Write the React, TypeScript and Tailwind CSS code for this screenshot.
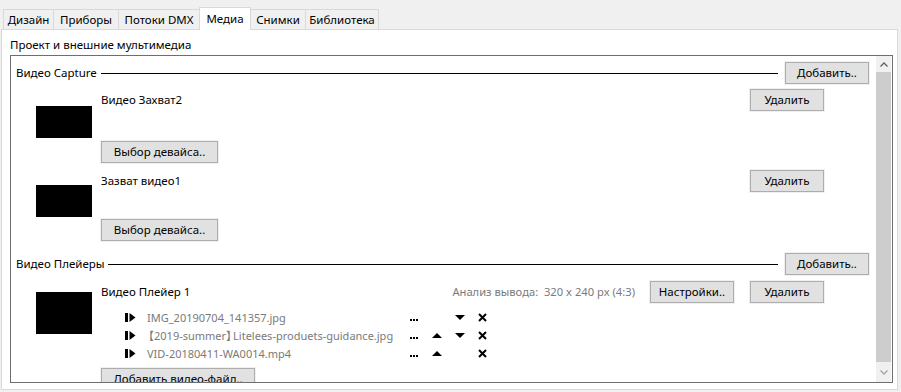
import React from "react";

function Btn({ children, className = "" }: { children: React.ReactNode; className?: string }) {
  return (
    <div
      className={`h-[22px] shrink-0 flex items-center justify-center border border-[#adadad] bg-[#e1e1e1] shadow-[0_0_0_1px_#f0f0f0] text-[11.5px] leading-none text-black ${className}`}
    >
      {children}
    </div>
  );
}

function Header({ label, mt }: { label: string; mt: string }) {
  return (
    <div className={`flex items-center h-[22px] ${mt}`}>
      <span className="text-[11.5px] leading-none">{label}</span>
      <div className="flex-1 h-px bg-black ml-[4px] mr-[7px]" />
      <Btn className="w-[84px]">Добавить..</Btn>
    </div>
  );
}

function PlayIcon() {
  return (
    <svg width="11" height="9" viewBox="0 0 11 9" className="block">
      <rect x="0" y="0" width="3" height="9" fill="#000" />
      <path d="M4.5 0 L10.5 4.5 L4.5 9 Z" fill="#000" />
    </svg>
  );
}

function Dots() {
  return (
    <svg width="8" height="2" viewBox="0 0 8 2" className="block mt-[6px]">
      <rect x="0" y="0" width="2" height="2" fill="#000" />
      <rect x="3" y="0" width="2" height="2" fill="#000" />
      <rect x="6" y="0" width="2" height="2" fill="#000" />
    </svg>
  );
}

function Up() {
  return (
    <svg width="10" height="5" viewBox="0 0 10 5" className="block">
      <path d="M0 5 L5 0 L10 5 Z" fill="#000" />
    </svg>
  );
}

function Down() {
  return (
    <svg width="10" height="5" viewBox="0 0 10 5" className="block">
      <path d="M0 0 L10 0 L5 5 Z" fill="#000" />
    </svg>
  );
}

function Cross() {
  return (
    <svg width="9" height="9" viewBox="0 0 9 9" className="block">
      <path d="M1 1 L8 8 M8 1 L1 8" stroke="#000" strokeWidth="2" />
    </svg>
  );
}

function CaptureItem({
  title,
  mt,
  rectMt,
  btnMt,
}: {
  title: string;
  mt: string;
  rectMt: string;
  btnMt: string;
}) {
  return (
    <div className={`flex ${mt}`}>
      <div className="w-[85px] shrink-0 pl-[20px]">
        <div className={`w-[56px] h-[32px] bg-black ${rectMt}`} />
      </div>
      <div className="flex-1 pr-[45px] flex flex-col items-start">
        <div className="self-stretch flex items-center justify-between h-[22px]">
          <span className="text-[11.5px] leading-none">{title}</span>
          <Btn className="w-[74px]">Удалить</Btn>
        </div>
        <Btn className={`w-[117px] ${btnMt}`}>Выбор девайса..</Btn>
      </div>
    </div>
  );
}

const files: { name: React.ReactNode; up: boolean; down: boolean }[] = [
  { name: "IMG_20190704_141357.jpg", up: false, down: true },
  {
    name: (
      <>
        <span className="-ml-[4px]">【</span>2019-summer<span className="tracking-[-4px]">】</span>Litelees-produets-guidance.jpg
      </>
    ),
    up: true,
    down: true,
  },
  { name: "VID-20180411-WA0014.mp4", up: true, down: false },
];

export default function App() {
  const tabs = [
    { label: "Дизайн", w: "w-[51px]" },
    { label: "Приборы", w: "w-[66px]" },
    { label: "Потоки DMX", w: "w-[82px]" },
    { label: "Медиа", w: "w-[52px]", active: true },
    { label: "Снимки", w: "w-[56px]" },
    { label: "Библиотека", w: "w-[74px]" },
  ];
  return (
    <div className="w-[901px] h-[392px] bg-[#f0f0f0] overflow-hidden font-['Noto_Sans',sans-serif] text-black">
      <div className="h-[29px] flex items-end pl-[3px] relative z-10">
        {tabs.map((t, i) =>
          t.active ? (
            <div
              key={i}
              className={`${t.w} h-[23px] -mb-px -ml-px bg-white border border-b-0 border-[#d9d9d9] flex items-center justify-center text-[11.5px] leading-none pb-[1px]`}
            >
              {t.label}
            </div>
          ) : (
            <div
              key={i}
              className={`${t.w} h-[20px] ${i === 0 ? "" : "-ml-px"} bg-[#f0f0f0] border border-b-0 border-[#d9d9d9] flex items-center justify-center text-[11.5px] leading-none pt-[1px]`}
            >
              {t.label}
            </div>
          )
        )}
      </div>
      <div className="ml-[1px] w-[897px] h-[361px] border border-[#d9d9d9] bg-white pl-[8px] pt-[7px]">
        <div className="text-[11.5px] leading-[16px]">Проект и внешние мультимедиа</div>
        <div className="mt-[2px] w-[883px] h-[328px] border border-[#6e6e6e] flex">
          <div className="flex-1 overflow-hidden pl-[5px] pr-[7px]">
            <Header label="Видео Capture" mt="mt-[6px]" />
            <CaptureItem title="Видео Захват2" mt="mt-[5px]" rectMt="mt-[17px]" btnMt="mt-[30px]" />
            <CaptureItem title="Зазват видео1" mt="mt-[7px]" rectMt="mt-[15px]" btnMt="mt-[27px]" />
            <Header label="Видео Плейеры" mt="mt-[12px]" />
            <div className="flex mt-[6px]">
              <div className="w-[85px] shrink-0 pl-[20px]">
                <div className="w-[56px] h-[42px] bg-black mt-[11px]" />
              </div>
              <div className="flex-1 pr-[45px] flex flex-col items-start">
                <div className="self-stretch flex items-center h-[22px]">
                  <span className="text-[11.5px] leading-none">Видео Плейер 1</span>
                  <div className="flex-1" />
                  <span className="text-[11.2px] leading-none text-[#7a7a7a] whitespace-pre">
                    Анализ вывода:  320 x 240 px (4:3)
                  </span>
                  <Btn className="w-[84px] ml-[15px]">Настройки..</Btn>
                  <Btn className="w-[74px] ml-[16px]">Удалить</Btn>
                </div>
                <div className="mt-[5px] flex flex-col">
                  {files.map((f, i) => (
                    <div key={i} className="flex items-center h-[18px]">
                      <div className="w-[24px]" />
                      <div className="w-[22px]">
                        <PlayIcon />
                      </div>
                      <div className="w-[263px] text-[11px] leading-none text-[#7a7a7a] whitespace-nowrap font-['Noto_Sans','Noto_Sans_CJK_SC',sans-serif]">
                        {f.name}
                      </div>
                      <div className="w-[22px]">
                        <Dots />
                      </div>
                      <div className="w-[23px]">{f.up ? <Up /> : null}</div>
                      <div className="w-[23px]">{f.down ? <Down /> : null}</div>
                      <div className="w-[10px]">
                        <Cross />
                      </div>
                    </div>
                  ))}
                </div>
                <Btn className="w-[154px] mt-[6px]">Добавить видео-файл..</Btn>
              </div>
            </div>
          </div>
          <div className="w-[15px] flex flex-col mr-[1px]">
            <div className="h-[16px] bg-[#f0f0f0] flex items-center justify-center">
              <svg width="8" height="5" viewBox="0 0 8 5" className="block">
                <path d="M0.5 4.5 L4 1 L7.5 4.5" stroke="#606060" strokeWidth="1.3" fill="none" />
              </svg>
            </div>
            <div className="h-[290px] bg-[#cdcdcd]" />
            <div className="flex-1 bg-[#f0f0f0] flex items-center justify-center">
              <svg width="8" height="5" viewBox="0 0 8 5" className="block">
                <path d="M0.5 0.5 L4 4 L7.5 0.5" stroke="#a3a3a3" strokeWidth="1.3" fill="none" />
              </svg>
            </div>
          </div>
        </div>
      </div>
    </div>
  );
}
